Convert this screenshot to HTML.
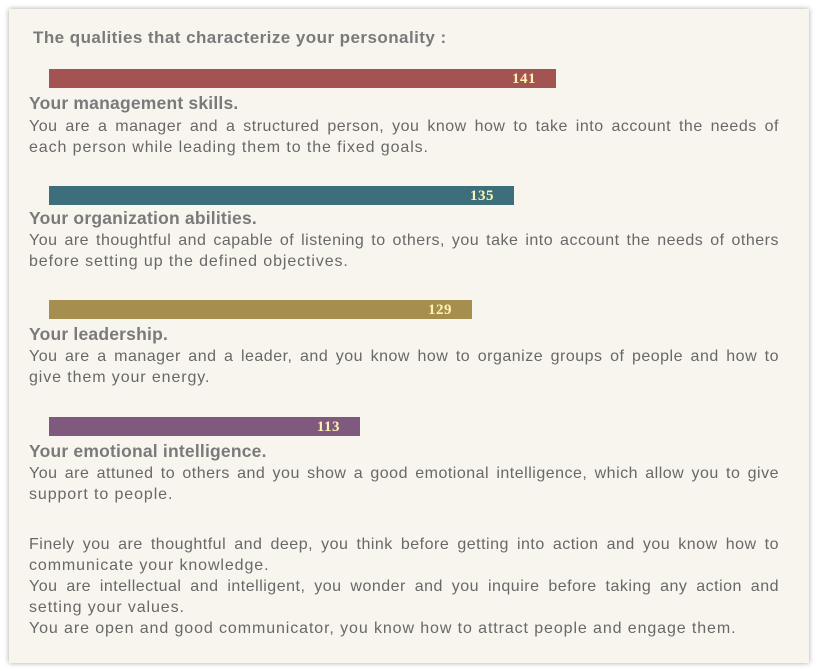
<!DOCTYPE html>
<html><head><style>
html,body{margin:0;padding:0;background:#fff;width:817px;height:671px;overflow:hidden}
.panel{position:absolute;left:9px;top:9px;width:800px;height:654px;background:#f8f5ee;box-shadow:0 0 5px rgba(0,0,0,.35)}
.a{position:absolute;font-family:"Liberation Sans",sans-serif;color:#666}
.t{left:33px;top:28px;font-size:17px;font-weight:bold;color:#7a7a7a;letter-spacing:0.45px}
.bar{position:absolute;left:49px;height:19px;font-family:"Liberation Serif",serif;font-weight:bold;font-size:15px;letter-spacing:0.5px;color:#fff3b0;text-align:right;line-height:21px;box-sizing:border-box;padding-right:20px}
.h{left:29px;font-size:17.5px;font-weight:bold;color:#7a7a7a;line-height:20px;letter-spacing:0.2px}
.p{left:29px;width:750px;font-size:16px;line-height:21px;color:#686868}
.p span{display:block;white-space:nowrap}
.f{letter-spacing:0.5px;text-align:justify;text-align-last:justify}
.l{letter-spacing:0.9px}
</style></head><body>
<div class="panel"></div>
<div class="a t">The qualities that characterize your personality :</div>

<div class="bar" style="top:69px;width:507px;background:#a45353">141</div>
<div class="a h" style="top:93px">Your management skills.</div>
<div class="a p" style="top:116px"><span class="f">You are a manager and a structured person, you know how to take into account the needs of</span><span class="l">each person while leading them to the fixed goals.</span></div>

<div class="bar" style="top:186px;width:465px;background:#3d6e7c">135</div>
<div class="a h" style="top:208px">Your organization abilities.</div>
<div class="a p" style="top:230px"><span class="f">You are thoughtful and capable of listening to others, you take into account the needs of others</span><span class="l">before setting up the defined objectives.</span></div>

<div class="bar" style="top:300px;width:423px;background:#a68f4e">129</div>
<div class="a h" style="top:324px">Your leadership.</div>
<div class="a p" style="top:346px"><span class="f">You are a manager and a leader, and you know how to organize groups of people and how to</span><span class="l">give them your energy.</span></div>

<div class="bar" style="top:417px;width:311px;background:#7f5a7e">113</div>
<div class="a h" style="top:441px">Your emotional intelligence.</div>
<div class="a p" style="top:463px"><span class="f">You are attuned to others and you show a good emotional intelligence, which allow you to give</span><span class="l">support to people.</span></div>

<div class="a p" style="top:534px"><span class="f">Finely you are thoughtful and deep, you think before getting into action and you know how to</span><span class="l">communicate your knowledge.</span><span class="f">You are intellectual and intelligent, you wonder and you inquire before taking any action and</span><span class="l">setting your values.</span><span class="l">You are open and good communicator, you know how to attract people and engage them.</span></div>
</body></html>
